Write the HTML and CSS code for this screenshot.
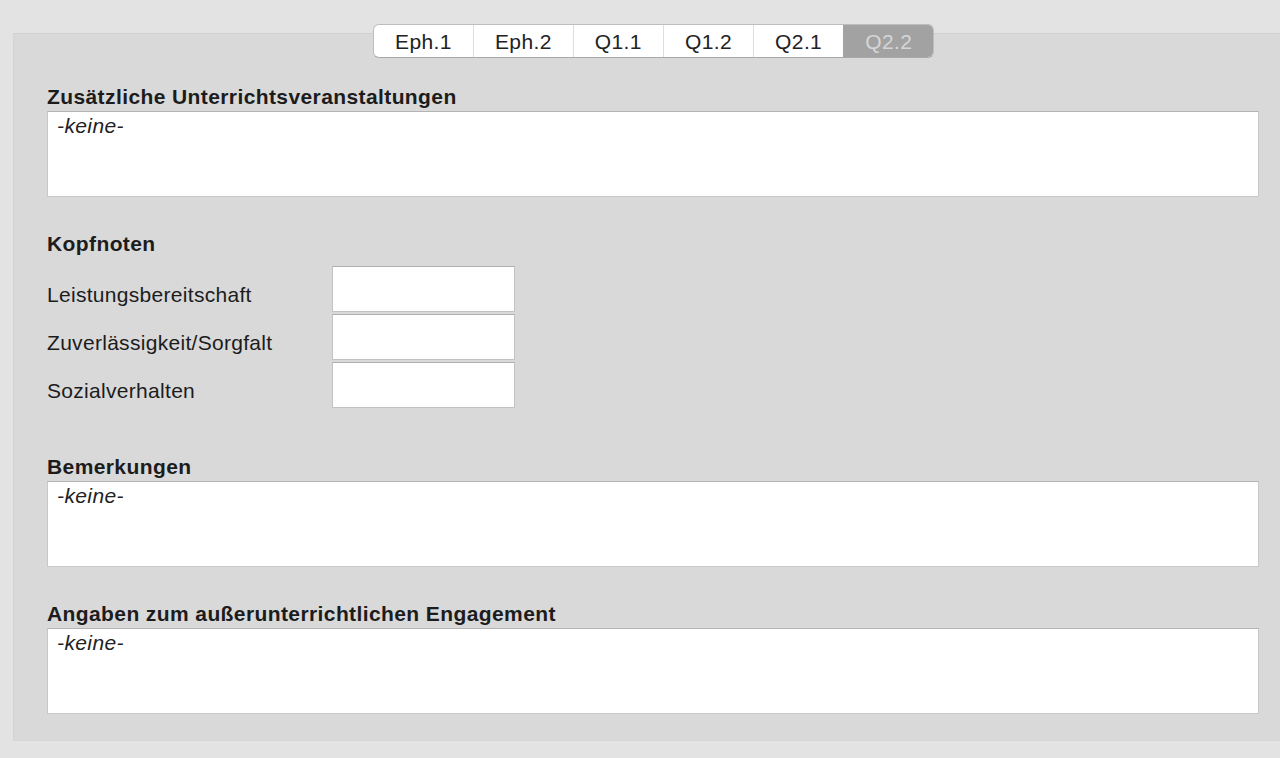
FILE: index.html
```html
<!DOCTYPE html>
<html>
<head>
  <title>Zeugnisangaben</title>
  <link rel="stylesheet" href="styles.css">
</head>
<body>
  <div class="panel">
    <div class="tabs">
      <div class="tab">Eph.1</div>
      <div class="tab">Eph.2</div>
      <div class="tab">Q1.1</div>
      <div class="tab">Q1.2</div>
      <div class="tab">Q2.1</div>
      <div class="tab active">Q2.2</div>
    </div>

    <h2 class="heading first">Zusätzliche Unterrichtsveranstaltungen</h2>
    <div class="textbox">-keine-</div>

    <h2 class="heading">Kopfnoten</h2>
    <div class="grades">
      <div class="grade-row">
        <label class="grade-label">Leistungsbereitschaft</label>
        <input type="text" class="grade-input">
      </div>
      <div class="grade-row">
        <label class="grade-label">Zuverlässigkeit/Sorgfalt</label>
        <input type="text" class="grade-input">
      </div>
      <div class="grade-row">
        <label class="grade-label">Sozialverhalten</label>
        <input type="text" class="grade-input">
      </div>
    </div>

    <h2 class="heading after-grades">Bemerkungen</h2>
    <div class="textbox">-keine-</div>

    <h2 class="heading">Angaben zum außerunterrichtlichen Engagement</h2>
    <div class="textbox">-keine-</div>
  </div>
</body>
</html>
```

FILE: styles.css
```css
body {
  margin: 0;
  background-color: #e3e3e3;
  font-family: "Liberation Sans", Arial, sans-serif;
  color: #1c1c1c;
  overflow: hidden;
}

.panel {
  margin: 33px -20px 0 13px;
  padding: 0 0 26px 33px;
  background-color: #d9d9d9;
  border-top: 1px solid #d0d0d0;
  border-left: 1px solid #d4d4d4;
  border-bottom: 1px solid #d6d6d6;
}

.tabs {
  display: flex;
  margin: -10px 0 0 326px;
  width: max-content;
  height: 32px;
  background-color: #fff;
  border: 1px solid #bdbdbd;
  border-bottom-color: #a8a8a8;
  border-radius: 6px;
  overflow: hidden;
}

.tab {
  padding: 0 21px;
  font-size: 21px;
  letter-spacing: 0.4px;
  line-height: 34px;
  border-left: 1px solid #dedede;
  color: #222;
}

.tab:first-child {
  border-left: none;
}

.tab.active {
  background-color: #a2a2a2;
  color: #d6d6d6;
  border-left-color: #a2a2a2;
}

.heading {
  margin: 35px 0 2px 0;
  font-size: 21px;
  letter-spacing: 0.4px;
  line-height: 24px;
  font-weight: bold;
}

.heading.first {
  margin-top: 27px;
}

.heading.after-grades {
  margin-top: 47px;
}

.textbox {
  width: 1212px;
  height: 86px;
  padding: 2px 0 0 9px;
  box-sizing: border-box;
  background-color: #fff;
  border: 1px solid #c8c8c8;
  border-top-color: #b4b4b4;
  font-size: 21px;
  letter-spacing: 0.4px;
  line-height: 24px;
  font-style: italic;
  color: #222;
}

.grades {
  display: flex;
  flex-direction: column;
  gap: 2px;
  margin-top: 10px;
}

.grade-row {
  display: flex;
  align-items: flex-end;
}

.grade-label {
  width: 285px;
  padding-bottom: 5px;
  font-size: 21px;
  letter-spacing: 0.3px;
  line-height: 24px;
}

.grade-input {
  width: 183px;
  height: 46px;
  margin: 0;
  box-sizing: border-box;
  border: 1px solid #c2c2c2;
  border-top-color: #b0b0b0;
  background-color: #fff;
}
```
